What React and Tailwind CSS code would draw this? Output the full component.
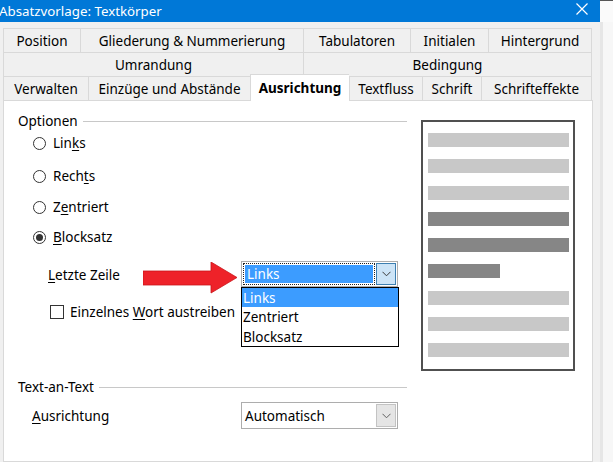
import React from "react";

const filaTabs1 = [
  { label: "Position", w: "w-[77px]" },
  { label: "Gliederung & Nummerierung", w: "w-[223px]" },
  { label: "Tabulatoren", w: "w-[107px]" },
  { label: "Initialen", w: "w-[78px]" },
  { label: "Hintergrund", w: "w-[104px]" },
];

const filaTabs2 = [
  { label: "Umrandung", w: "w-[300px]" },
  { label: "Bedingung", w: "w-[289px]" },
];

const filaTabs3 = [
  { label: "Verwalten", w: "w-[85px]" },
  { label: "Einzüge und Abstände", w: "w-[162px]" },
  { label: "Ausrichtung", w: "w-[99px]", activo: true },
  { label: "Textfluss", w: "w-[73px]" },
  { label: "Schrift", w: "w-[59px]" },
  { label: "Schrifteffekte", w: "w-[111px]" },
];

const barras = ["claro", "claro", "claro", "oscuro", "oscuro", "corto", "claro", "claro", "claro"];

const Tab = ({ label, w, activo, ultimo }) => {
  if (activo) {
    return (
      <div className={`${w} h-[27px] -mt-[2px] relative z-10 bg-white border-t border-l border-[#d9d9d9] flex items-center justify-center font-bold text-black`}>
        {label}
      </div>
    );
  }
  return (
    <div className={`${w} h-[24px] border-t border-l border-[#d9d9d9] ${ultimo ? "border-r" : ""} flex items-center justify-center`}>
      {label}
    </div>
  );
};

const FilaTabs = ({ tabs }) => (
  <div className="flex h-[24px] items-start">
    {tabs.map((t, i) => (
      <Tab key={t.label} {...t} ultimo={i === tabs.length - 1} />
    ))}
  </div>
);

const Chevron = ({ color = "#606060" }) => (
  <svg width="9" height="6" viewBox="0 0 9 6">
    <path d="M0.5 0.8 L4.5 4.8 L8.5 0.8" fill="none" stroke={color} strokeWidth="1" />
  </svg>
);

const Radio = ({ marcado, children }) => (
  <div className="flex items-center h-[20px] ml-[15px] gap-[7px]">
    <div className="w-[13px] h-[13px] rounded-full border border-[#333] bg-white flex items-center justify-center">
      {marcado && <div className="w-[7px] h-[7px] rounded-full bg-[#333]" />}
    </div>
    <span>{children}</span>
  </div>
);

const Encabezado = ({ texto }) => (
  <div className="flex items-center h-[18px]">
    <span>{texto}</span>
    <div className="flex-1 h-px bg-[#c8c8c8] ml-[5px]" />
  </div>
);

const Flecha = () => (
  <svg width="94" height="32" viewBox="0 0 94 32" className="mt-[1px] shrink-0">
    <polygon points="0,9 68,9 68,0 94,15.5 68,31 68,23 0,23" fill="#ee2229" stroke="#c9151b" strokeWidth="0.8" />
  </svg>
);

export default function App() {
  return (
    <div className="w-[613px] h-[462px] flex overflow-hidden bg-[#f0f0f0] text-[13.5px] text-black font-['Noto_Sans',sans-serif] leading-[18px]">
      <div className="w-[600px] flex flex-col shrink-0">
        <div className="h-[22px] shrink-0 bg-[#0078d7] flex items-center justify-between text-white">
          <span className="-ml-[1px] text-[13.3px]">Absatzvorlage: Textkörper</span>
          <svg width="12" height="12" viewBox="0 0 12 12" className="mr-[12px] -mt-[4px]">
            <path d="M0.5 0.5 L11.5 11.5 M11.5 0.5 L0.5 11.5" stroke="white" strokeWidth="1.2" />
          </svg>
        </div>

        <div className="flex-1 min-h-0 pl-[3px] pt-[6px]">
          <FilaTabs tabs={filaTabs1} />
          <FilaTabs tabs={filaTabs2} />
          <FilaTabs tabs={filaTabs3} />

          <div className="w-[590px] h-[362px] bg-white border border-[#d9d9d9] flex flex-col">
            <div className="flex">
              <div className="w-[403px] pl-[14px] flex flex-col">
                <div className="mt-[11px]">
                  <Encabezado texto="Optionen" />
                </div>
                <div className="mt-[3px]">
                  <Radio>Lin<u className="underline-offset-2">k</u>s</Radio>
                </div>
                <div className="mt-[13px]">
                  <Radio>Rech<u className="underline-offset-2">t</u>s</Radio>
                </div>
                <div className="mt-[11px]">
                  <Radio>Z<u className="underline-offset-2">e</u>ntriert</Radio>
                </div>
                <div className="mt-[10px]">
                  <Radio marcado><u className="underline-offset-2">B</u>locksatz</Radio>
                </div>

                <div className="mt-[14px] flex items-start">
                  <span className="ml-[30px] w-[95px] mt-[5px]">
                    <u className="underline-offset-2">L</u>etzte Zeile
                  </span>
                  <Flecha />
                  <div className="relative ml-[4px]">
                    <div className="w-[157px] h-[26px] border border-[#adadad] bg-white flex items-center p-[1px]">
                      <div className="flex-1 h-full border border-dotted border-[#222] p-px">
                        <div className="h-full bg-[#3c9cff] text-white flex items-center pl-[2px]">Links</div>
                      </div>
                      <div className="w-[20px] h-full ml-[1px] bg-[#cce4f7] border border-[#3c7fb1] flex items-center justify-center">
                        <Chevron color="#3a3a3a" />
                      </div>
                    </div>
                    <div className="absolute left-0 top-[26px] w-[158px] bg-white border border-black flex flex-col">
                      <div className="h-[19px] bg-[#3c9cff] text-white pl-[1px] flex items-center">Links</div>
                      <div className="h-[20px] pl-[1px] flex items-center">Zentriert</div>
                      <div className="h-[19px] pl-[1px] flex items-center">Blocksatz</div>
                    </div>
                  </div>
                </div>

                <div className="mt-[8px] h-[20px] flex items-center ml-[32px] gap-[6px]">
                  <div className="w-[14px] h-[14px] border border-[#333] bg-white" />
                  <span>Einzelnes <u className="underline-offset-2">W</u>ort austreiben</span>
                </div>
              </div>

              <div className="ml-[14px] mt-[19px] w-[154px] h-[251px] border-2 border-[#505050] pt-[11px] pl-[5px] flex flex-col gap-[12.3px]">
                {barras.map((b, i) => (
                  <div
                    key={i}
                    className={`h-[14px] ${b === "corto" ? "w-[72px] bg-[#868686]" : b === "oscuro" ? "w-[141px] bg-[#868686]" : "w-[141px] bg-[#c8c8c8]"}`}
                  />
                ))}
              </div>
            </div>

            <div className="w-[403px] pl-[14px] mt-[7px] flex flex-col">
              <Encabezado texto="Text-an-Text" />
              <div className="mt-[6px] flex items-center">
                <span className="ml-[14px] w-[209px]">
                  <u className="underline-offset-2">A</u>usrichtung
                </span>
                <div className="w-[157px] h-[27px] border border-[#adadad] bg-white flex items-center p-[1px]">
                  <div className="flex-1 pl-[2px]">Automatisch</div>
                  <div className="w-[20px] h-[23px] bg-[#e5e5e5] border border-[#c3c3c3] flex items-center justify-center">
                    <Chevron />
                  </div>
                </div>
              </div>
            </div>
          </div>
        </div>
      </div>

      <div className="flex-1 flex flex-col">
        <div className="h-[22px] shrink-0 bg-[#fafafa] border-t border-[#555]" />
        <div className="flex-1 bg-[#f7f7f7] border-l-[3px] border-[#e6e6e6]" />
      </div>
    </div>
  );
}
